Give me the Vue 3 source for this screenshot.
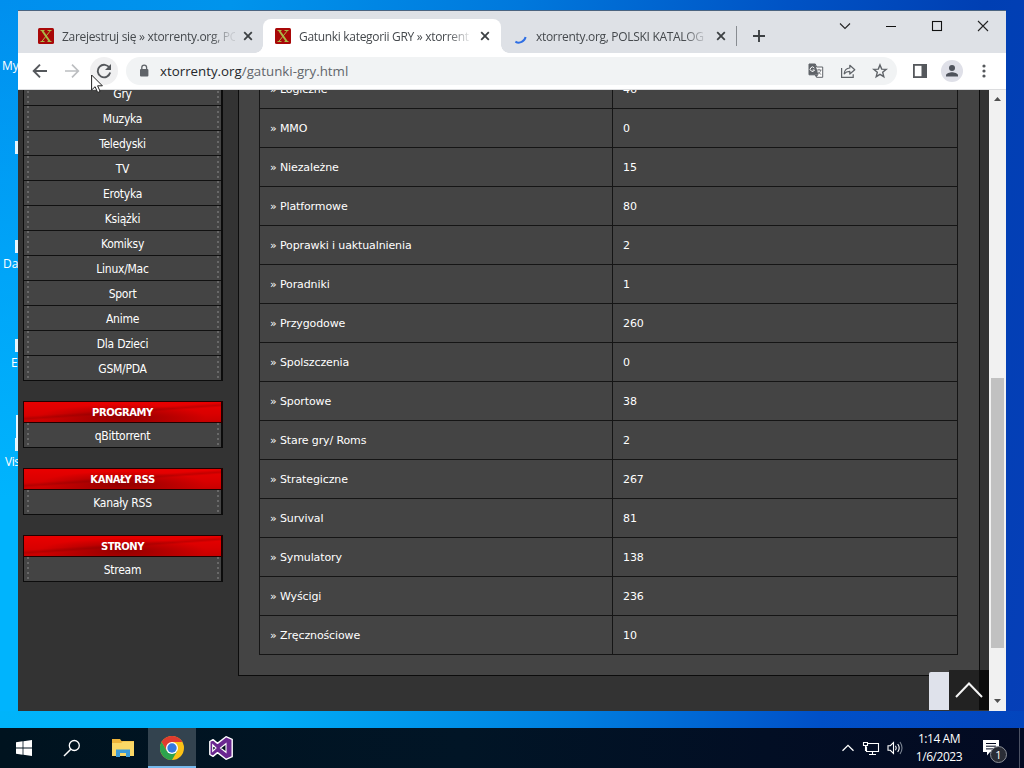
<script setup>
import { ref } from 'vue'

const tabs = ref([
  { id: 1, title: 'Zarejestruj się » xtorrenty.org, PC', kind: 'site' },
  { id: 2, title: 'Gatunki kategorii GRY » xtorrent', kind: 'site' },
  { id: 3, title: 'xtorrenty.org, POLSKI KATALOG', kind: 'loading' }
])
const activeTab = ref(2)

const categories = [
  'Gry', 'Muzyka', 'Teledyski', 'TV', 'Erotyka', 'Książki', 'Komiksy',
  'Linux/Mac', 'Sport', 'Anime', 'Dla Dzieci', 'GSM/PDA'
]

const boxes = [
  { title: 'PROGRAMY', link: 'qBittorrent' },
  { title: 'KANAŁY RSS', link: 'Kanały RSS' },
  { title: 'STRONY', link: 'Stream' }
]

const genres = [
  { name: 'Logiczne', count: 46 },
  { name: 'MMO', count: 0 },
  { name: 'Niezależne', count: 15 },
  { name: 'Platformowe', count: 80 },
  { name: 'Poprawki i uaktualnienia', count: 2 },
  { name: 'Poradniki', count: 1 },
  { name: 'Przygodowe', count: 260 },
  { name: 'Spolszczenia', count: 0 },
  { name: 'Sportowe', count: 38 },
  { name: 'Stare gry/ Roms', count: 2 },
  { name: 'Strategiczne', count: 267 },
  { name: 'Survival', count: 81 },
  { name: 'Symulatory', count: 138 },
  { name: 'Wyścigi', count: 236 },
  { name: 'Zręcznościowe', count: 10 }
]
</script>

<template>
  <div class="desktop">
    <span class="desk-label label-my">My</span>
    <span class="desk-label label-da">Da</span>
    <span class="desk-label label-e">E</span>
    <span class="desk-label label-vis">Vis</span>
    <i class="sliver sliver-a"></i>
    <i class="sliver sliver-b"></i>
    <i class="sliver sliver-c"></i>
    <i class="sliver sliver-d"></i>
    <i class="sliver sliver-e"></i>

    <div class="window">
      <div class="tab-strip">
        <div
          v-for="tab in tabs"
          :key="tab.id"
          class="tab"
          :class="{ active: tab.id === activeTab }"
          @click="activeTab = tab.id"
        >
          <svg v-if="tab.kind === 'site'" class="favicon" width="16" height="16" viewBox="0 0 16 16">
            <rect width="16" height="16" rx="1.5" fill="#a80808" />
            <path d="M2.5 2.5h4M9.5 2.5h4M2.5 13.5h4M9.5 13.5h4M12.3 2.8L4 13.2" fill="none" stroke="#a9b948" stroke-width="1" />
            <path d="M4.3 2.8l7.3 10.4" stroke="#a9b948" stroke-width="2" />
          </svg>
          <svg v-else class="favicon" width="16" height="16" viewBox="0 0 16 16">
            <path d="M3.4 13.6C7.5 16.2 12.6 13.4 13.6 9" fill="none" stroke="#2f6fe4" stroke-width="2" />
          </svg>
          <span class="tab-title">{{ tab.title }}</span>
          <svg class="tab-close" width="10" height="10" viewBox="0 0 10 10">
            <path d="M1.2 1.2l7.6 7.6M8.8 1.2L1.2 8.8" stroke="#3c4043" stroke-width="1.8" />
          </svg>
        </div>
        <span class="tab-divider"></span>
        <svg class="new-tab" width="12" height="12" viewBox="0 0 12 12">
          <path d="M6 0v12M0 6h12" stroke="#3c4043" stroke-width="1.9" />
        </svg>
        <div class="caption">
          <span class="caption-btn">
            <svg width="12" height="12" viewBox="0 0 12 12"><path d="M1 3.5l5 5 5-5" fill="none" stroke="#222" stroke-width="1.1" /></svg>
          </span>
          <span class="caption-btn">
            <svg width="12" height="12" viewBox="0 0 12 12"><path d="M1 6.5h10" stroke="#111" /></svg>
          </span>
          <span class="caption-btn">
            <svg width="12" height="12" viewBox="0 0 12 12"><rect x="1.5" y="1.5" width="9" height="9" fill="none" stroke="#111" stroke-width="1.1" /></svg>
          </span>
          <span class="caption-btn">
            <svg width="12" height="12" viewBox="0 0 12 12"><path d="M1 1l10 10M11 1L1 11" stroke="#222" stroke-width="1.1" /></svg>
          </span>
        </div>
      </div>

      <div class="toolbar">
        <span class="tool">
          <svg width="16" height="16" viewBox="0 0 16 16"><path d="M15 8H2M8 1.7L1.7 8 8 14.3" fill="none" stroke="#55585c" stroke-width="1.9" /></svg>
        </span>
        <span class="tool">
          <svg width="16" height="16" viewBox="0 0 16 16"><path d="M1 8h13M8 1.7L14.3 8 8 14.3" fill="none" stroke="#bcbec1" stroke-width="1.7" /></svg>
        </span>
        <span class="tool hovered">
          <svg width="16" height="16" viewBox="0 0 16 16">
            <path d="M13.6 5A6.3 6.3 0 1 0 14.2 9.6" fill="none" stroke="#55585c" stroke-width="1.9" />
            <path d="M15 1v6H9z" fill="#55585c" />
          </svg>
        </span>
        <div class="omnibox">
          <svg class="lock" width="12" height="14" viewBox="0 0 12 14">
            <rect x="2" y="5" width="8.4" height="7.5" rx="1" fill="#5f6368" />
            <path d="M3.8 5.5V3.6a2.4 2.4 0 0 1 4.8 0v1.9" fill="none" stroke="#5f6368" stroke-width="1.3" />
          </svg>
          <span class="url">xtorrenty.org<span class="path">/gatunki-gry.html</span></span>
          <span class="omni-icons">
            <svg width="16" height="16" viewBox="0 0 16 16">
              <path d="M1 1h6.3l1.3 3H14.7v10.3H8.5L7.2 11.8H1z" fill="#fff" stroke="#5f6368" stroke-width="1" />
              <path d="M1 1h6.2l3.2 10.8H1z" fill="#5f6368" />
              <path d="M6.3 5A2.2 2.2 0 1 0 6.5 7H4.6" fill="none" stroke="#fff" />
              <path d="M8.5 7h5M11 5.8V7M12.8 7c-.5 2.4-2 3.6-3 4M10 8.6c.8 1.4 1.8 2.2 3.2 2.7" fill="none" stroke="#5f6368" stroke-width=".8" />
              <path d="M7.2 11.8h3.1l-1.8 2.5z" fill="#5f6368" />
            </svg>
            <svg width="16" height="16" viewBox="0 0 16 16">
              <path d="M1.6 5v9.4h11.6v-3.2" fill="none" stroke="#5f6368" stroke-width="1.2" />
              <path d="M4.2 10.8C4.5 7 6.5 5.2 9.8 5V2.3l5 4.4-5 4.3V8.3C7.3 8.3 5.6 9 4.2 10.8z" fill="none" stroke="#5f6368" stroke-width="1.2" stroke-linejoin="round" />
            </svg>
            <svg width="16" height="16" viewBox="0 0 16 16">
              <path d="M8 1.9l1.7 4.2 4.5.3-3.5 2.9 1.1 4.4L8 11.3l-3.8 2.4 1.1-4.4-3.5-2.9 4.5-.3z" fill="none" stroke="#5f6368" stroke-width="1.4" />
            </svg>
          </span>
        </div>
        <span class="tool side-tool">
          <svg width="14" height="14" viewBox="0 0 14 14">
            <rect x=".9" y=".9" width="12.2" height="12.2" fill="#fff" stroke="#55585c" stroke-width="1.8" />
            <rect x="8.5" y="1" width="5" height="12" fill="#55585c" />
          </svg>
        </span>
        <span class="tool">
          <svg width="22" height="22" viewBox="0 0 22 22">
            <circle cx="11" cy="11" r="11" fill="#dfe0e8" />
            <circle cx="11" cy="8" r="3" fill="#4f535c" />
            <path d="M5 16.6v-1.4c0-2 4-3 6-3s6 1 6 3v1.4z" fill="#4f535c" />
          </svg>
        </span>
        <span class="tool">
          <svg width="4" height="14" viewBox="0 0 4 14" fill="#55585c">
            <circle cx="2" cy="2" r="1.6" /><circle cx="2" cy="7" r="1.6" /><circle cx="2" cy="12" r="1.6" />
          </svg>
        </span>
      </div>

      <div class="viewport">
        <div class="page">
          <aside class="sidebar">
            <ul class="menu">
              <li v-for="item in categories" :key="item">{{ item }}</li>
            </ul>
            <section v-for="box in boxes" :key="box.title" class="box">
              <h3>{{ box.title }}</h3>
              <ul class="menu">
                <li>{{ box.link }}</li>
              </ul>
            </section>
          </aside>
          <main class="panel">
            <div class="genres">
              <div v-for="genre in genres" :key="genre.name" class="genre">
                <span class="genre-name">» {{ genre.name }}</span>
                <span class="genre-count">{{ genre.count }}</span>
              </div>
            </div>
          </main>
          <div class="to-top">
            <span class="to-top-tab"></span>
            <span class="to-top-btn">
              <svg width="28" height="16" viewBox="0 0 28 16"><path d="M1 15L14 1.5 27 15" fill="none" stroke="#f4f4f4" stroke-width="2" /></svg>
            </span>
          </div>
        </div>
        <div class="scrollbar">
          <svg width="7" height="4" viewBox="0 0 7 4"><path d="M0 4L3.5 0 7 4z" fill="#505050" /></svg>
          <div class="track"><div class="thumb"></div></div>
          <svg width="7" height="4" viewBox="0 0 7 4"><path d="M0 0l3.5 4L7 0z" fill="#505050" /></svg>
        </div>
      </div>
    </div>

    <div class="taskbar">
      <span class="task">
        <svg width="16" height="16" viewBox="0 0 16 16" fill="#fff"><path d="M0 2.2L6.6 1.3v6.2H0zM7.4 1.2L16 0v7.5H7.4zM0 8.4h6.6v6.3L0 13.8zM7.4 8.4H16V16l-8.6-1.2z" /></svg>
      </span>
      <span class="task">
        <svg width="18" height="18" viewBox="0 0 18 18"><circle cx="11.3" cy="6.5" r="5" fill="none" stroke="#fff" stroke-width="1.3" /><path d="M7.8 10.2L1 17" stroke="#fff" stroke-width="1.5" /></svg>
      </span>
      <span class="task explorer">
        <svg width="22" height="18" viewBox="0 0 22 18">
          <path d="M0 0h8l1.5 2H22v15H0z" fill="#eeb43a" />
          <path d="M0 4h9l2-1.5h11V17H0z" fill="#fbd866" />
          <path d="M4 18v-7.5h14V18h-4v-4H8v4z" fill="#3d9bd6" />
        </svg>
      </span>
      <span class="task chrome">
        <svg width="24" height="24" viewBox="0 0 24 24">
          <circle cx="12" cy="12" r="12" fill="#fbc116" />
          <path d="M1.6 6A12 12 0 0 1 22.4 6H12L6.8 15z" fill="#df3b2f" />
          <path d="M1.6 6A12 12 0 0 0 12 24l5.2-9H6.8z" fill="#2da34d" />
          <circle cx="12" cy="12" r="6" fill="#fff" />
          <circle cx="12" cy="12" r="4.7" fill="#3479e0" />
        </svg>
      </span>
      <span class="task">
        <svg width="24" height="24" viewBox="0 0 24 24">
          <path d="M.8 5.5L4 3.6l4.5 3.8L17 .7l6.2 2.6v17.4L17 23.3l-8.5-6.7L4 20.4.8 18.5z" fill="#6a2790" stroke="#fff" stroke-width="1.4" stroke-linejoin="round" />
          <path d="M3.7 8.8v6.4L7 12zM17 7.7v8.6L11.5 12z" fill="#03121f" stroke="#fff" stroke-width="1.1" />
        </svg>
      </span>

      <div class="tray">
        <svg class="tray-icon" width="14" height="14" viewBox="0 0 14 14"><path d="M1.5 9.7L7 4.3l5.5 5.4" fill="none" stroke="#fff" stroke-width="1.3" /></svg>
        <svg class="tray-icon" width="18" height="16" viewBox="0 0 18 16">
          <path d="M6 3.5h10.5v8H4.5v-5M7 14.5h7M10.5 11.5v3" fill="none" stroke="#fff" stroke-width="1.1" />
          <path d="M1.5 2.5h4v3h-4zM3.5 5.5v5.5" fill="none" stroke="#fff" stroke-width="1.1" />
        </svg>
        <svg class="tray-icon" width="16" height="14" viewBox="0 0 16 14">
          <path d="M1 4.7h2.3L6.5 1.5v11L3.3 9.3H1z" fill="none" stroke="#fff" stroke-width="1.1" />
          <path d="M8.5 4.8q1.5 2.2 0 4.4M10.7 3q3 4 0 8" fill="none" stroke="#fff" stroke-width="1.1" />
          <path d="M13 1q4 6 0 12" fill="none" stroke="#7b8492" stroke-width="1.1" />
        </svg>
        <div class="clock">
          <span>1:14 AM</span>
          <span>1/6/2023</span>
        </div>
        <div class="notify">
          <svg width="16" height="16" viewBox="0 0 16 16">
            <path d="M0 0h16v12H7l-3 3.5V12H0z" fill="#fff" />
            <path d="M3 3.5h10M3 6.2h10M3 8.9h7" stroke="#03091f" stroke-width="1" />
          </svg>
          <span class="badge">1</span>
        </div>
        <span class="show-desktop"></span>
      </div>
    </div>

    <svg class="cursor" width="13" height="20" viewBox="0 0 13 20">
      <path d="M.6 1v15l3.5-3.3 2.6 5.8 2.4-1.1-2.5-5.6h4.8z" fill="#fff" stroke="#222" stroke-width="1" />
    </svg>
  </div>
</template>

<style>
html,
body {
  margin: 0;
  overflow: hidden;
}
</style>

<style scoped>
.desktop {
  position: relative;
  display: flex;
  flex-direction: column;
  justify-content: flex-end;
  width: 1024px;
  height: 768px;
  overflow: hidden;
  background:
    linear-gradient(to right, #00b4fa 0%, #00aef7 25%, #0080e0 55%, #0050c8 80%, #0345bd 100%) 0 711px / 100% 17px no-repeat,
    linear-gradient(to bottom, rgba(0, 178, 255, 0) 0%, rgba(0, 178, 255, 0.6) 35%, #00b4fd 65%) 0 0 / 18px 100% no-repeat,
    linear-gradient(100deg, #008fee 0%, #0094ec 20%, #0078dc 45%, #0053c5 68%, #003fb3 85%, #063fb8 100%);
  font-family: 'Open Sans', 'Noto Sans', sans-serif;
}

.desktop svg {
  display: block;
  flex: none;
}

.desk-label {
  position: absolute;
  color: #fff;
  font-size: 12px;
  line-height: 16px;
}

.label-my { left: 2px; top: 58px; }
.label-da { left: 3px; top: 256px; }
.label-e { left: 11px; top: 355px; }
.label-vis { left: 5px; top: 454px; letter-spacing: -0.5px; }

.sliver {
  position: absolute;
  left: 15px;
  width: 3px;
  height: 13px;
  background: #e6f5fc;
}

.sliver-a { top: 141px; }
.sliver-b { top: 240px; }
.sliver-c { top: 339px; }
.sliver-d { top: 415px; left: 16px; height: 24px; }
.sliver-e { top: 438px; }

.window {
  position: absolute;
  left: 18px;
  top: 10px;
  width: 988px;
  height: 701px;
  display: flex;
  flex-direction: column;
  overflow: hidden;
}

.tab-strip {
  display: flex;
  align-items: center;
  height: 43px;
  box-sizing: border-box;
  padding-top: 8px;
  border-top: 1px solid #4b6480;
  background: #dee1e6;
}

.tab {
  display: flex;
  align-items: center;
  width: 237px;
  height: 34px;
  box-sizing: border-box;
  padding: 0 12px 0 11px;
  border-radius: 8px 8px 0 0;
}

.tab:first-child {
  width: 245px;
  padding-left: 20px;
  padding-right: 10px;
}

.tab.active {
  position: relative;
  width: 238px;
  padding: 0 11px 0 12px;
  background: #fff;
}

.tab.active::before,
.tab.active::after {
  content: '';
  position: absolute;
  bottom: 0;
  width: 8px;
  height: 8px;
}

.tab.active::before {
  left: -8px;
  background: radial-gradient(circle at 0 0, transparent 7.5px, #fff 8px);
}

.tab.active::after {
  right: -8px;
  background: radial-gradient(circle at 100% 0, transparent 7.5px, #fff 8px);
}

.tab-title {
  flex: 1;
  min-width: 0;
  margin: 0 8px;
  white-space: nowrap;
  color: #45494d;
  font-size: 12px;
  letter-spacing: -0.31px;
  mask-image: linear-gradient(to right, #000 86%, rgba(0, 0, 0, 0.15) 98%);
}

.tab-divider {
  width: 1px;
  height: 20px;
  margin-left: -2px;
  background: #888c91;
}

.new-tab {
  margin-left: 16px;
}

.caption {
  display: flex;
  margin: -21px 0 0 auto;
}

.caption-btn {
  display: flex;
  justify-content: center;
  width: 46px;
}

.toolbar {
  display: flex;
  align-items: center;
  height: 37px;
  box-sizing: border-box;
  padding-left: 8px;
  border-bottom: 1px solid #dcdddf;
  background: #fff;
}

.tool {
  display: flex;
  align-items: center;
  justify-content: center;
  width: 28px;
  height: 28px;
  margin-right: 4px;
  border-radius: 50%;
}

.hovered {
  background: #f0f0f1;
}

.omnibox {
  display: flex;
  align-items: center;
  width: 771px;
  height: 28px;
  box-sizing: border-box;
  padding: 0 9px 0 12px;
  margin-left: 4px;
  border-radius: 14px;
  background: #f1f3f4;
}

.url {
  margin-left: 10px;
  color: #24272b;
  font-size: 13.3px;
}

.path {
  color: #62666b;
}

.omni-icons {
  display: flex;
  gap: 16px;
  margin-left: auto;
}

.side-tool {
  margin-left: 9px;
}

.viewport {
  display: flex;
  height: 621px;
}

.page {
  position: relative;
  display: flex;
  align-items: flex-start;
  width: 971px;
  overflow: hidden;
  background: #333;
}

.sidebar {
  width: 200px;
  margin: -10px 15px 0 5px;
  color: #fff;
  font-family: 'DejaVu Sans Condensed', 'DejaVu Sans', sans-serif;
  font-size: 12px;
  text-align: center;
}

.menu {
  list-style: none;
  margin: 0;
  padding: 0;
  border: solid #0c0c0c;
  border-width: 1px 2px 1px 1px;
  background: #444;
}

.menu li {
  height: 24px;
  padding: 0 2px;
  background:
    repeating-linear-gradient(to bottom, #686868 0 2px, transparent 2px 5px) 3px 0 / 2px 100% no-repeat,
    repeating-linear-gradient(to bottom, #686868 0 2px, transparent 2px 5px) calc(100% - 2px) 0 / 2px 100% no-repeat;
  line-height: 27px;
  letter-spacing: -0.25px;
}

.menu li + li {
  border-top: 1px solid #111;
}

.box {
  margin-top: 20px;
}

.box h3 {
  height: 20px;
  margin: 0;
  border: 1px solid #200;
  border-right-width: 2px;
  background:
    radial-gradient(ellipse at 50% 75%, rgba(125, 0, 0, 0.75), transparent 60%),
    linear-gradient(176deg, transparent 42%, rgba(120, 0, 0, 0.3) 50%, transparent 56%),
    linear-gradient(#e90000, #d90000 60%, #c80000);
  font-family: 'DejaVu Sans', sans-serif;
  font-size: 10px;
  font-weight: bold;
  line-height: 21px;
  letter-spacing: -0.45px;
}

.box .menu {
  border-top: 0;
}

.panel {
  width: 742px;
  height: 606px;
  box-sizing: border-box;
  margin-top: -20px;
  padding-left: 20px;
  border: 1px solid #0c0c0c;
  border-top: 0;
  background: #444;
}

.genres {
  width: 699px;
  box-sizing: border-box;
  margin-top: -1px;
  border: 1px solid #151515;
  border-bottom: 0;
}

.genre {
  display: flex;
  height: 38px;
  border-bottom: 1px solid #151515;
  color: #fff;
  font-family: 'DejaVu Sans', sans-serif;
  font-size: 11px;
  line-height: 39px;
  letter-spacing: -0.12px;
}

.genre-name {
  width: 353px;
  box-sizing: border-box;
  padding-left: 10px;
  border-right: 1px solid #151515;
}

.genre-count {
  padding-left: 10px;
}

.to-top {
  position: absolute;
  right: 0;
  bottom: 1px;
  display: flex;
  align-items: flex-end;
}

.to-top-tab {
  width: 20px;
  height: 38px;
  border-radius: 2px 0 0 0;
  background: #dfe2eb;
}

.to-top-btn {
  display: flex;
  align-items: center;
  width: 34px;
  height: 40px;
  padding-left: 6px;
  background: linear-gradient(to right, #222 0 30px, #0c0c0c 30px);
}

.scrollbar {
  display: flex;
  flex-direction: column;
  align-items: center;
  width: 17px;
  box-sizing: border-box;
  padding: 7px 0 8px;
  background: #f1f1f1;
}

.track {
  flex: 1;
  width: 13px;
  padding-top: 277px;
}

.thumb {
  height: 270px;
  background: #c1c1c1;
}

.taskbar {
  display: flex;
  height: 40px;
  background: linear-gradient(to right, #00131f, #011526 45%, #020e24 75%, #030a22);
}

.task {
  display: flex;
  align-items: center;
  justify-content: center;
  width: 48px;
}

.explorer {
  margin-left: 3px;
  margin-right: 1px;
}

.chrome {
  margin-right: 1px;
  box-shadow: inset 0 -2px #76b9ed;
  background: #33434f;
}

.tray {
  display: flex;
  align-items: center;
  margin-left: auto;
  color: #fff;
}

.tray-icon {
  margin-right: 7px;
}

.clock {
  display: flex;
  flex-direction: column;
  width: 58px;
  font-size: 12px;
  line-height: 18px;
  text-align: center;
  letter-spacing: -0.45px;
}

.notify {
  position: relative;
  margin: 0 20px 0 15px;
}

.badge {
  position: absolute;
  left: 7px;
  top: 6px;
  width: 15px;
  height: 15px;
  border: 1px solid #8c9098;
  border-radius: 50%;
  background: #2a2d36;
  font-size: 11px;
  line-height: 15px;
  text-align: center;
}

.show-desktop {
  width: 4px;
  height: 40px;
  border-left: 1px solid #4c5264;
}

.cursor {
  position: absolute;
  left: 91px;
  top: 74px;
}
</style>
